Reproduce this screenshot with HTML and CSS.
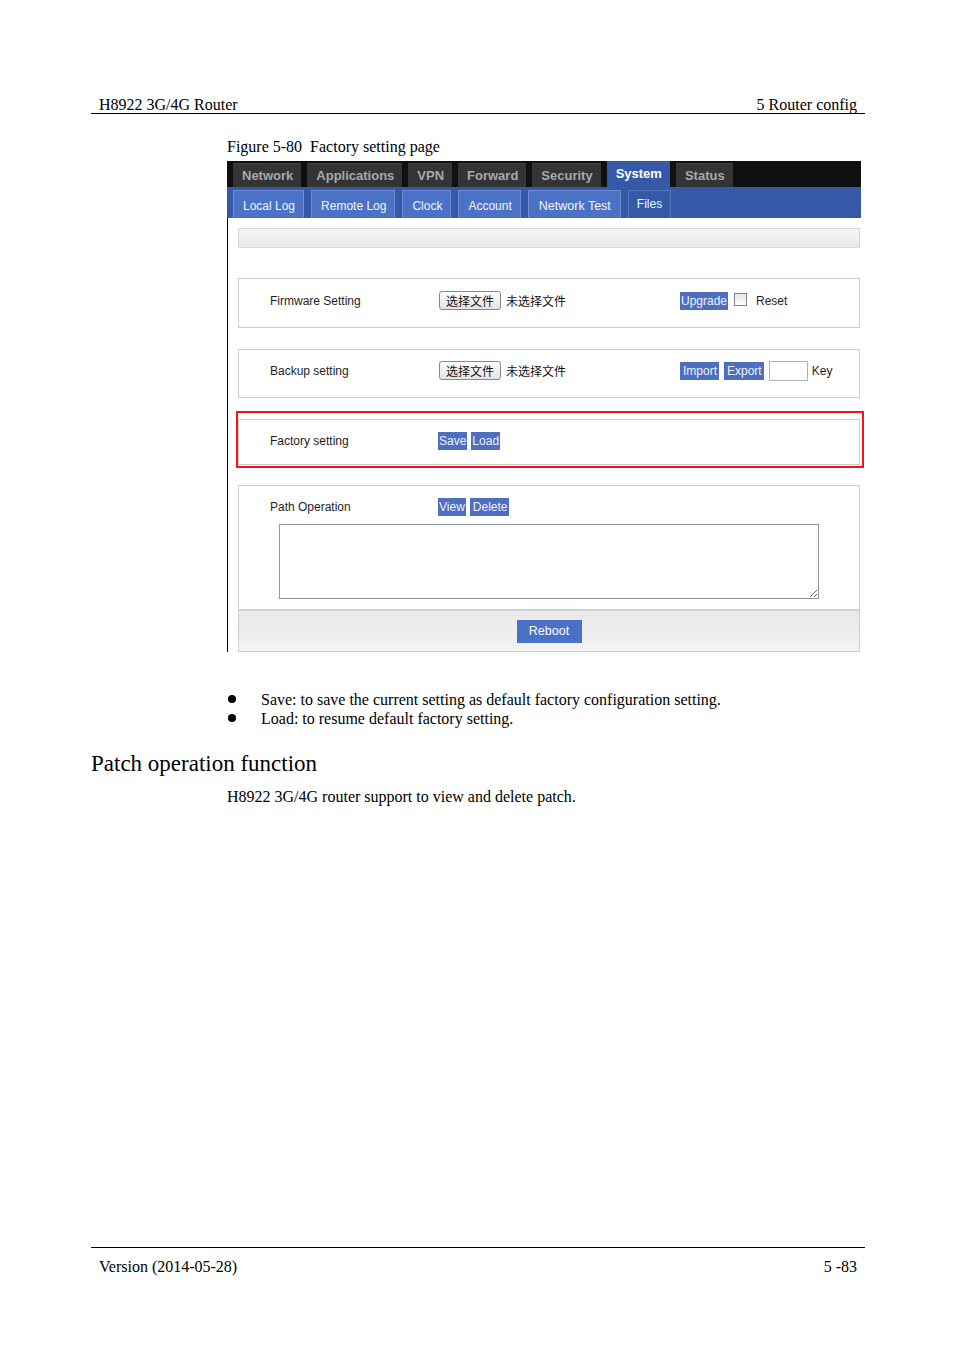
FILE: index.html
```html
<!DOCTYPE html>
<html lang="en">
<head>
<meta charset="utf-8">
<title>Factory setting page</title>
<link rel="stylesheet" href="styles.css">
</head>
<body>
<div class="page">
  <header class="doc-header">
    <span>H8922 3G/4G Router</span>
    <span>5 Router config</span>
  </header>

  <div class="caption">Figure 5-80&nbsp;&nbsp;Factory setting page</div>

  <div class="shot">
    <div class="topbar">
      <div class="tab">Network</div>
      <div class="tab">Applications</div>
      <div class="tab">VPN</div>
      <div class="tab">Forward</div>
      <div class="tab">Security</div>
      <div class="tab tab-active">System</div>
      <div class="tab">Status</div>
    </div>
    <div class="subbar">
      <div class="subtab">Local Log</div>
      <div class="subtab">Remote Log</div>
      <div class="subtab">Clock</div>
      <div class="subtab">Account</div>
      <div class="subtab subtab-wide">Network Test</div>
      <div class="subtab subtab-active">Files</div>
    </div>

    <div class="content">
      <div class="graybar"></div>

      <div class="box box-firmware">
        <div class="label">Firmware Setting</div>
        <div class="col2">
          <span class="filebtn">选择文件</span>
          <span class="nofile">未选择文件</span>
        </div>
        <div class="col3">
          <span class="bbtn">Upgrade</span>
          <span class="checkbox"></span>
          <span class="reset">Reset</span>
        </div>
      </div>

      <div class="box box-backup">
        <div class="label">Backup setting</div>
        <div class="col2">
          <span class="filebtn">选择文件</span>
          <span class="nofile">未选择文件</span>
        </div>
        <div class="col3">
          <span class="bbtn bbtn-wide">Import</span>
          <span class="bbtn bbtn-wide">Export</span>
          <span class="keyinput"></span>
          <span class="keylabel">Key</span>
        </div>
      </div>

      <div class="box box-factory">
        <div class="label">Factory setting</div>
        <div class="col2">
          <span class="bbtn">Save</span>
          <span class="bbtn">Load</span>
        </div>
        <div class="redmark"></div>
      </div>

      <div class="pathbox">
        <div class="pathrow">
          <div class="label">Path Operation</div>
          <div class="col2">
            <span class="bbtn">View</span>
            <span class="bbtn bbtn-wide">Delete</span>
          </div>
        </div>
        <textarea class="patharea"></textarea>
      </div>
      <div class="footbar">
        <span class="reboot">Reboot</span>
      </div>
    </div>
  </div>

  <ul class="bullets">
    <li><span class="dot"></span><span>Save: to save the current setting as default factory configuration setting.</span></li>
    <li><span class="dot"></span><span>Load: to resume default factory setting.</span></li>
  </ul>

  <h2 class="section">Patch operation function</h2>
  <p class="para">H8922 3G/4G router support to view and delete patch.</p>

  <footer class="doc-footer">
    <span>Version (2014-05-28)</span>
    <span>5 -83</span>
  </footer>
</div>
</body>
</html>
```

FILE: styles.css
```css
* { box-sizing: border-box; }

html, body {
  margin: 0;
  padding: 0;
  background: #fff;
}

body {
  font-family: "Liberation Serif", "Times New Roman", serif;
  color: #000;
}

.page {
  width: 954px;
  height: 1350px;
  display: flex;
  flex-direction: column;
}

.doc-header {
  margin: 0 89px 0 91px;
  padding: 96px 8px 0 8px;
  display: flex;
  justify-content: space-between;
  font-size: 16px;
  line-height: 17px;
  border-bottom: 1px solid #000;
}

.caption {
  margin: 24px 0 0 227px;
  font-size: 16px;
  line-height: 17px;
}

/* ---------- screenshot ---------- */
.shot {
  margin: 6px 0 0 227px;
  width: 634px;
  font-family: "Liberation Sans", Arial, sans-serif;
}

.topbar {
  height: 26px;
  background: #101010;
  display: flex;
  align-items: flex-end;
  padding-left: 6px;
  gap: 6px;
}

.tab {
  height: 24px;
  padding: 0 8px 0 9px;
  background: #343434;
  color: #a9a9a9;
  font-size: 13px;
  font-weight: bold;
  line-height: 24px;
  border-top: 1px solid #444;
}

.tab-active {
  height: 26px;
  background: #3659a7;
  color: #fff;
  line-height: 26px;
  border-top: none;
}

.subbar {
  height: 31px;
  background: #3659a7;
  display: flex;
  align-items: flex-end;
  padding-left: 6px;
  gap: 7px;
}

.subtab {
  height: 28px;
  padding: 2px 8px 0 9px;
  background: #4b72c5;
  border: 1px solid #6d8ed6;
  border-bottom: none;
  color: #f2f5fb;
  font-size: 12px;
  line-height: 26px;
}

.subtab-wide {
  padding: 2px 9px 0 10px;
  font-size: 12.5px;
}

.subtab-active {
  padding: 0 8px 0 8px;
  background: #3659a7;
  border-color: #5677bd;
}

.content {
  border-left: 1px solid #000;
  padding: 10px 1px 0 10px;
  font-size: 12px;
  color: #1e1e1e;
}

.graybar {
  height: 20px;
  border: 1px solid #d8d8d8;
  background: linear-gradient(#f5f5f5, #e9e9e9);
}

.box {
  border: 1px solid #cdcdcd;
  display: flex;
  align-items: center;
  position: relative;
}

.box-firmware { margin-top: 30px; height: 50px; padding-bottom: 5px; }
.box-backup { margin-top: 21px; height: 49px; padding-bottom: 6px; }
.box-factory { margin-top: 21px; height: 46px; padding-bottom: 2px; }

.label {
  width: 199px;
  padding-left: 31px;
  flex: none;
}

.col2 {
  width: 242px;
  flex: none;
  display: flex;
  align-items: center;
  gap: 4px;
}

.col3 {
  display: flex;
  align-items: center;
}

.filebtn {
  display: inline-block;
  height: 19px;
  width: 62px;
  margin-left: 1px;
  margin-right: 1px;
  border: 1px solid #7d8b99;
  border-radius: 3px;
  background: linear-gradient(#ffffff, #e3e3e3);
  font-family: "Noto Sans CJK SC", sans-serif;
  font-size: 12px;
  line-height: 17px;
  text-align: center;
  color: #111;
}

.nofile {
  font-family: "Noto Sans CJK SC", sans-serif;
  font-size: 12px;
  color: #111;
}

.bbtn {
  display: inline-block;
  height: 18px;
  padding: 0 1px;
  background: #4d6ec1;
  color: #eef2fb;
  font-size: 12px;
  line-height: 18px;
}

.bbtn-wide { padding: 0 2px 0 3px; }

.col3 .bbtn + .bbtn { margin-left: 5px; }

.checkbox {
  width: 13px;
  height: 13px;
  margin: 0 8px 3px 6px;
  border: 1px solid #7b8591;
  background: linear-gradient(#e6e6e6, #fdfdfd);
}

.reset { margin-left: 1px; }

.keyinput {
  width: 39px;
  height: 20px;
  margin-left: 5px;
  border: 1px solid #a9b4c2;
  background: #fff;
}

.keylabel { margin-left: 4px; }

.redmark {
  position: absolute;
  left: -3px;
  right: -5px;
  top: -9px;
  bottom: -4px;
  border: 2px solid #f01414;
  pointer-events: none;
}

.pathbox {
  margin-top: 20px;
  border: 1px solid #cdcdcd;
  border-bottom: none;
  padding-bottom: 10px;
}

.pathrow {
  height: 38px;
  padding-top: 3px;
  display: flex;
  align-items: center;
}

.patharea {
  display: block;
  margin: 0 0 0 40px;
  width: 540px;
  height: 75px;
  border: 1px solid #8797a8;
  padding: 0;
  background: #fff;
}

.footbar {
  height: 43px;
  border: 1px solid #cdcdcd;
  border-top: 2px solid #d0d0d0;
  background: linear-gradient(#e9e9e9 0%, #ededed 50%, #f4f4f4 100%);
  display: flex;
  align-items: center;
  justify-content: center;
}

.reboot {
  display: inline-block;
  width: 65px;
  height: 23px;
  background: #4a70c7;
  color: #fff;
  text-align: center;
  font-size: 12.5px;
  line-height: 23px;
}

/* ---------- text ---------- */
.bullets {
  list-style: none;
  margin: 38px 0 0 227px;
  padding: 0;
  font-size: 16px;
  line-height: 19px;
}

.bullets li {
  display: flex;
  align-items: center;
}

.dot {
  width: 8px;
  height: 8px;
  margin: 0 25px 2px 1px;
  border-radius: 50%;
  background: #000;
  flex: none;
}

.section {
  margin: 23px 0 0 91px;
  font-family: "Liberation Serif", "Times New Roman", serif;
  font-weight: normal;
  font-size: 23px;
  line-height: 26px;
}

.para {
  margin: 11px 0 0 227px;
  font-size: 16px;
  line-height: 17px;
}

.doc-footer {
  margin: auto 89px 0 91px;
  padding: 10px 8px 75px 8px;
  border-top: 1px solid #000;
  display: flex;
  justify-content: space-between;
  font-size: 16px;
  line-height: 17px;
}
```
